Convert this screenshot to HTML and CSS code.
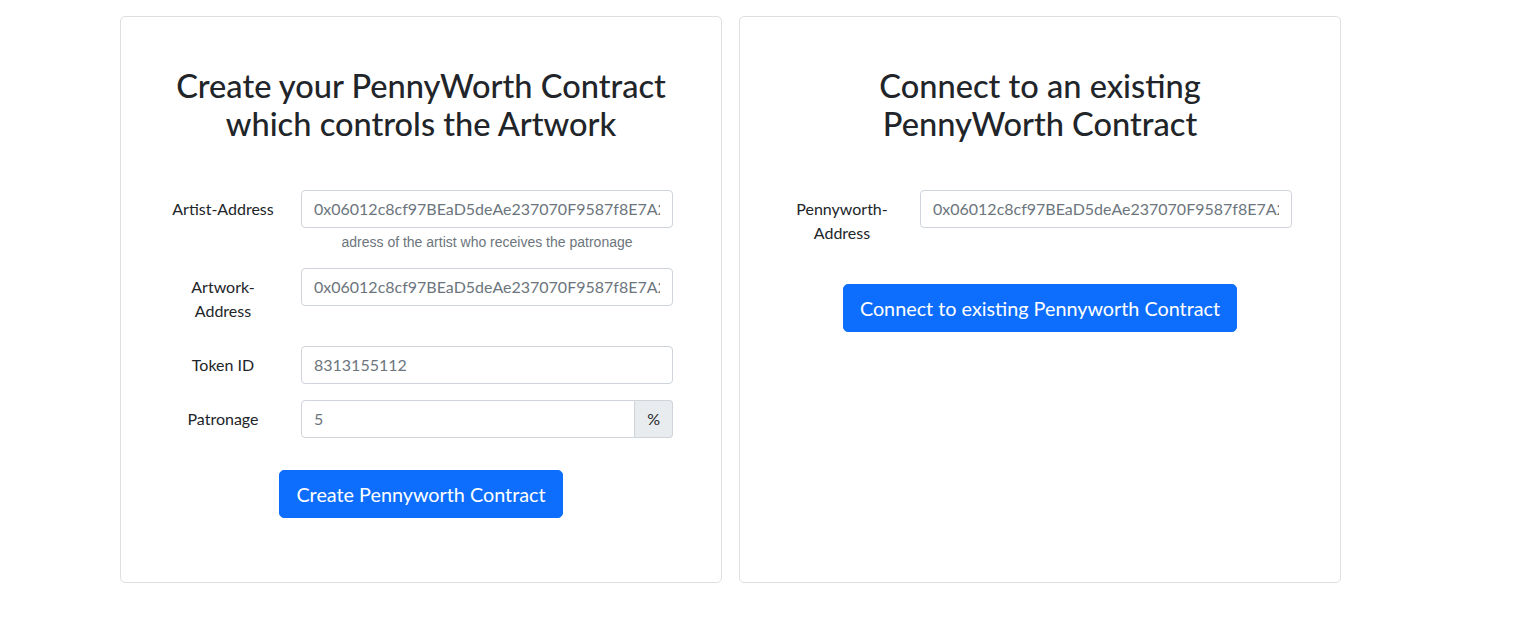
FILE: index.html
```html
<!DOCTYPE html>
<html lang="en">
<head>
<meta charset="utf-8">
<title>PennyWorth</title>
<link rel="stylesheet" href="styles.css">
</head>
<body>
<main class="page">
  <section class="card">
    <h2 class="card-title">Create your PennyWorth Contract<br>which controls the Artwork</h2>
    <div class="form-row">
      <label class="form-label" for="artist">Artist-Address</label>
      <div class="field">
        <input class="input" id="artist" type="text" placeholder="0x06012c8cf97BEaD5deAe237070F9587f8E7A266d">
        <div class="help">adress of the artist who receives the patronage</div>
      </div>
    </div>
    <div class="form-row">
      <label class="form-label" for="artwork">Artwork-Address</label>
      <div class="field">
        <input class="input" id="artwork" type="text" placeholder="0x06012c8cf97BEaD5deAe237070F9587f8E7A266d">
      </div>
    </div>
    <div class="form-row">
      <label class="form-label" for="token">Token ID</label>
      <div class="field">
        <input class="input" id="token" type="text" placeholder="8313155112">
      </div>
    </div>
    <div class="form-row">
      <label class="form-label" for="patronage">Patronage</label>
      <div class="field">
        <div class="input-group">
          <input class="input input-grouped" id="patronage" type="text" placeholder="5">
          <span class="addon">%</span>
        </div>
      </div>
    </div>
    <div class="actions">
      <button class="btn" type="button">Create Pennyworth Contract</button>
    </div>
  </section>

  <section class="card">
    <h2 class="card-title">Connect to an existing<br>PennyWorth Contract</h2>
    <div class="form-row">
      <label class="form-label" for="penny">Pennyworth-Address</label>
      <div class="field">
        <input class="input" id="penny" type="text" placeholder="0x06012c8cf97BEaD5deAe237070F9587f8E7A266d">
      </div>
    </div>
    <div class="actions">
      <button class="btn" type="button">Connect to existing Pennyworth Contract</button>
    </div>
  </section>
</main>
</body>
</html>
```
FILE: styles.css
```css
* { box-sizing: border-box; }

html, body {
  margin: 0;
  background: #fff;
}

body {
  font-family: Lato, "Liberation Sans", sans-serif;
  font-size: 16px;
  line-height: 24px;
  color: #212529;
}

.page {
  display: flex;
  align-items: stretch;
  gap: 17px;
  padding: 16px 0 0 120px;
}

.card {
  width: 602px;
  border: 1px solid #dfdfdf;
  border-radius: 5px;
  padding: 50px 48px 64px;
  background: #fff;
}

.card-title {
  margin: 0 0 46px;
  font-size: 32.6px;
  font-weight: 500;
  line-height: 38.4px;
  text-align: center;
  color: #212529;
}

.form-row {
  display: grid;
  grid-template-columns: 108px 1fr;
  column-gap: 24px;
  margin-bottom: 16px;
}

.form-label {
  padding: 7px 0;
  text-align: center;
  line-height: 24px;
}

.field {
  min-width: 0;
}

.input {
  display: block;
  width: 100%;
  height: 38px;
  padding: 6px 12px;
  font-family: inherit;
  font-size: 16px;
  line-height: 24px;
  color: #212529;
  background: #fff;
  border: 1px solid #ced4da;
  border-radius: 4px;
  outline: none;
}

.input::placeholder {
  color: #6c757d;
  opacity: 1;
}

.help {
  margin-top: 4px;
  font-family: "Liberation Sans", Arial, sans-serif;
  font-size: 14px;
  line-height: 20px;
  color: #6c757d;
  text-align: center;
}

.input-group {
  display: flex;
}

.input-grouped {
  flex: 1;
  min-width: 0;
  border-radius: 4px 0 0 4px;
}

.addon {
  display: flex;
  align-items: center;
  padding: 6px 12px;
  height: 38px;
  background: #e9ecef;
  border: 1px solid #ced4da;
  border-left: none;
  border-radius: 0 4px 4px 0;
  color: #212529;
}

.form-row:last-of-type {
  margin-bottom: 0;
}

.actions {
  display: flex;
  justify-content: center;
  margin-top: 32px;
}

.btn {
  height: 48px;
  padding: 8px 16px;
  font-family: inherit;
  font-size: 19.8px;
  line-height: 30px;
  color: #fff;
  background: #0d6efd;
  border: 1px solid #0d6efd;
  border-radius: 5px;
  cursor: pointer;
}
```
